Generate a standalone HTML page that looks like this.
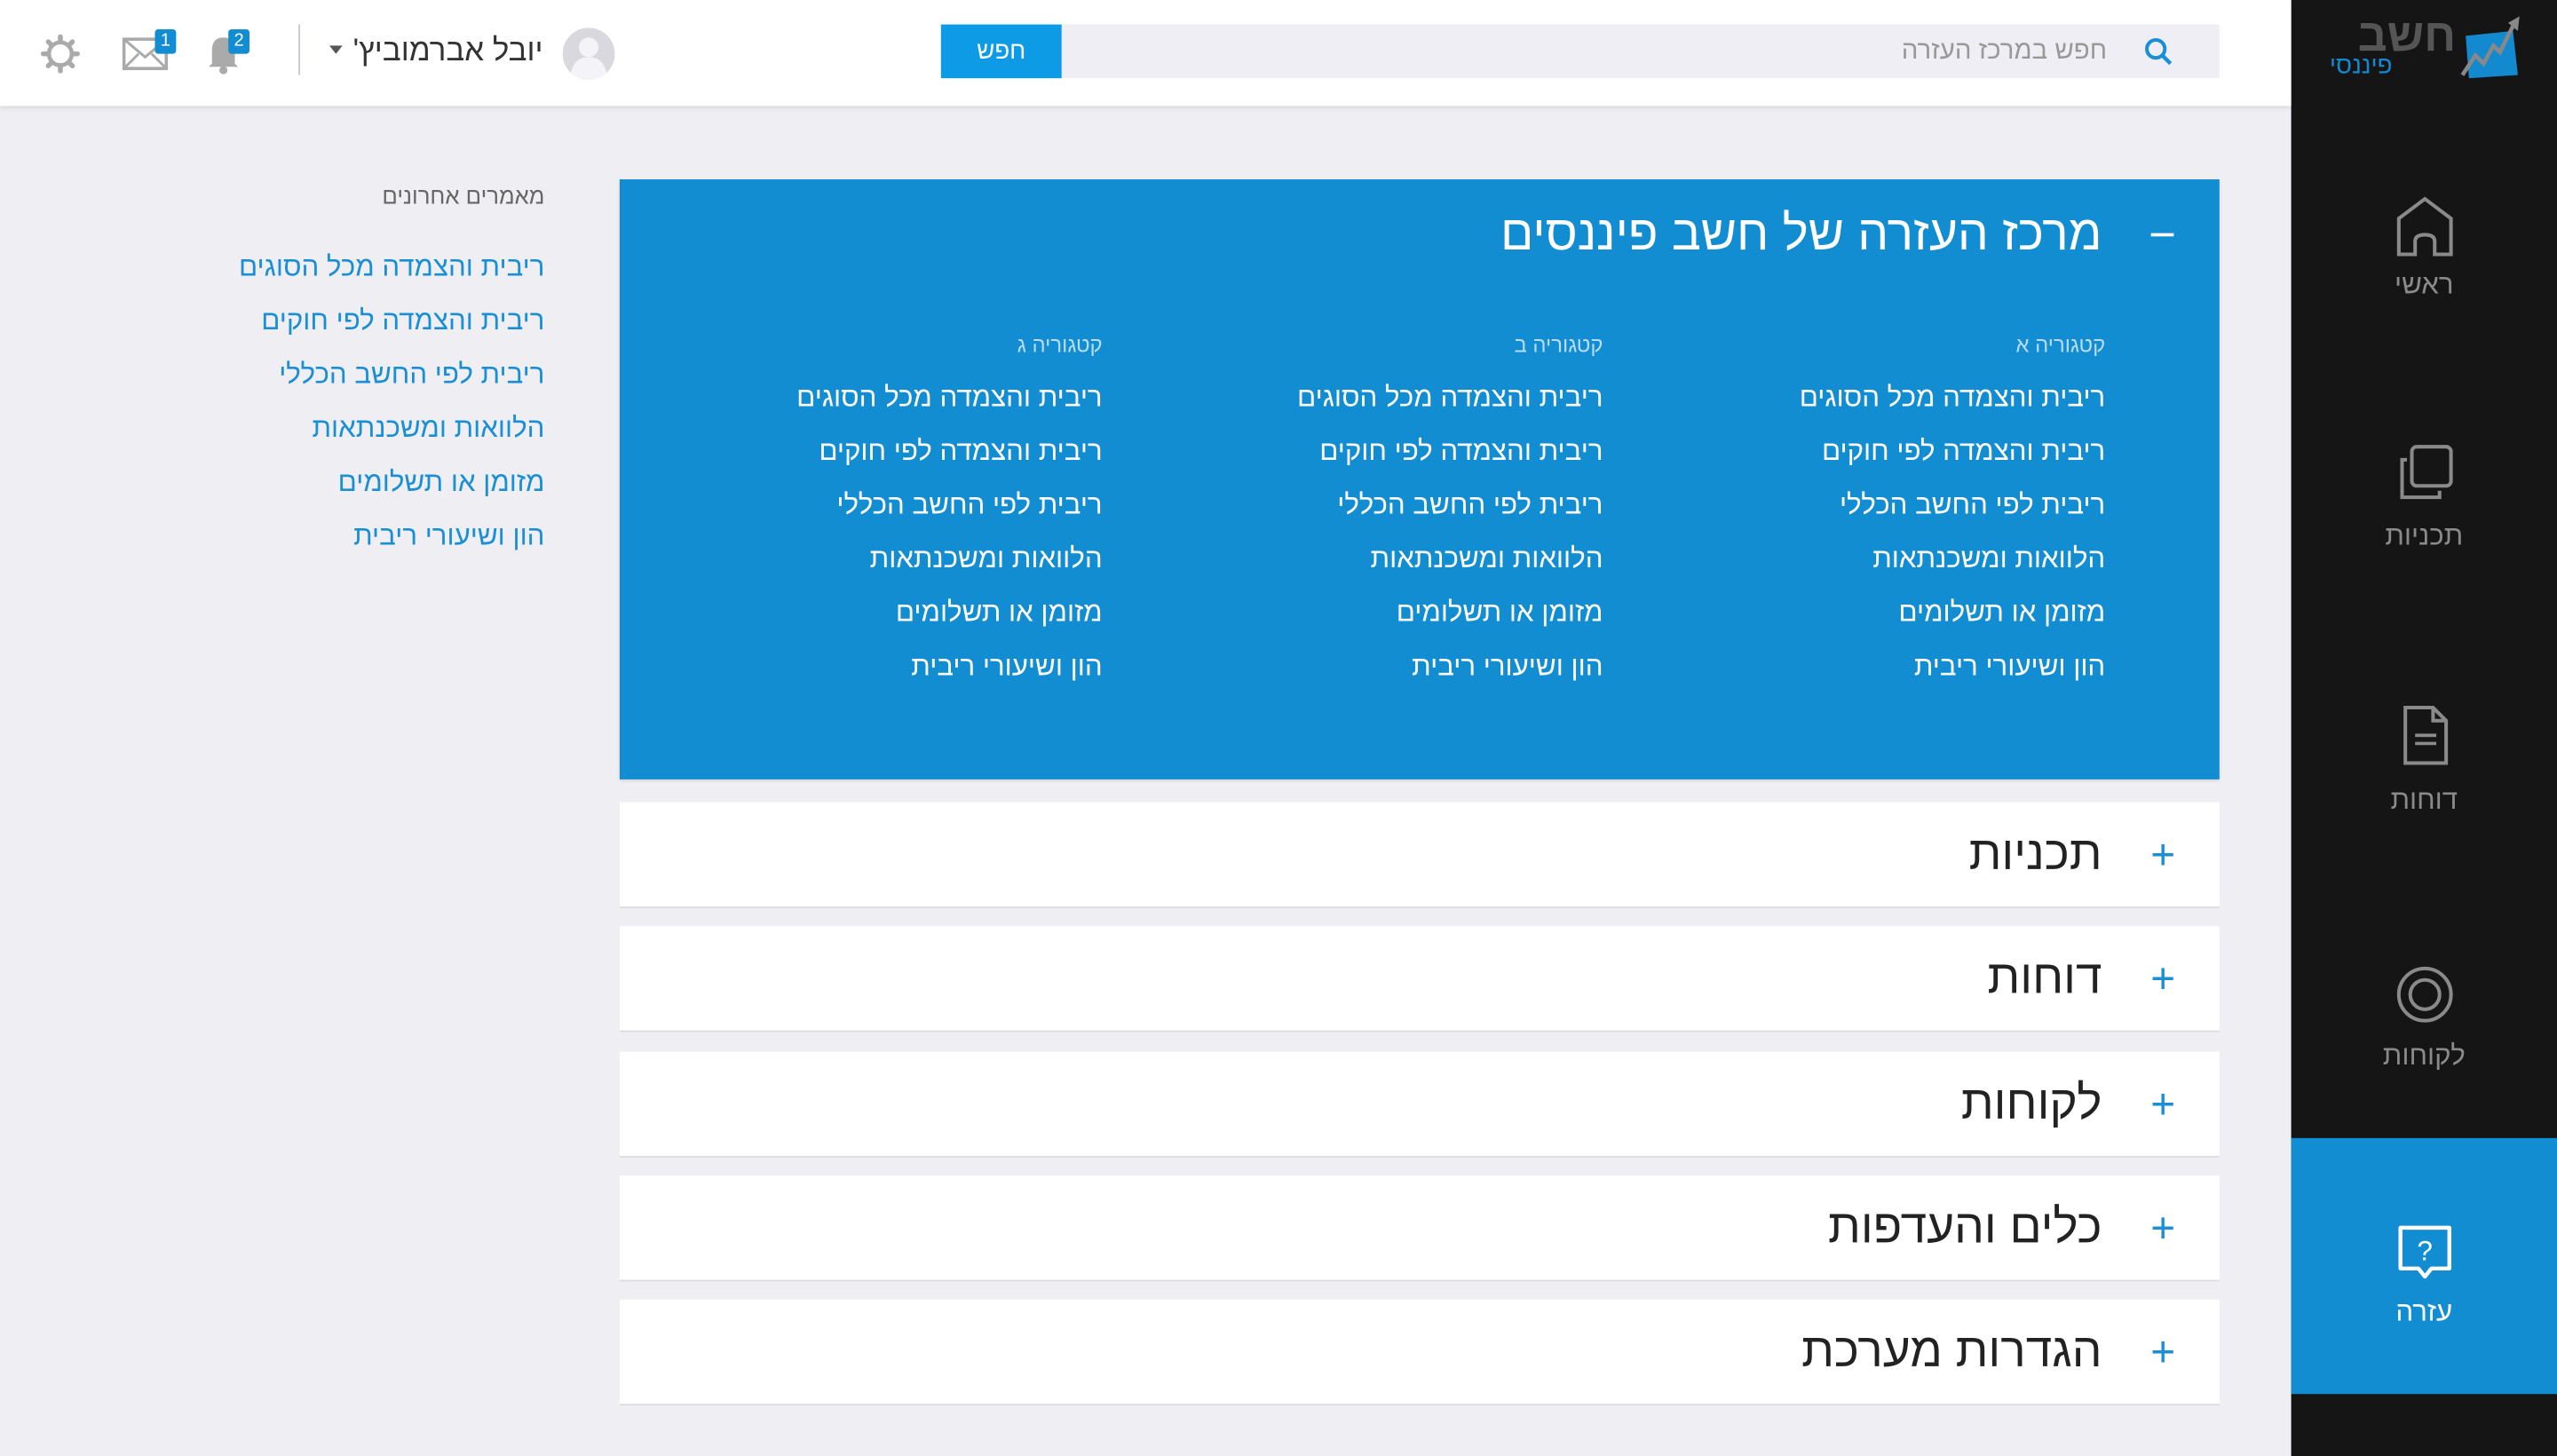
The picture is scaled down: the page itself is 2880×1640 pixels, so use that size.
<!DOCTYPE html>
<html><head><meta charset="utf-8"><style>
*{margin:0;padding:0;box-sizing:border-box}
html,body{width:2880px;height:1640px;overflow:hidden;background:#eeeef3}
#w{width:1568px;height:893px;position:relative;transform:scale(1.83673,1.8365);transform-origin:0 0;font-family:"Liberation Sans","Noto Sans CJK SC",sans-serif;background:#eeeef3}
.a{position:absolute}
.r{direction:rtl;text-align:right;white-space:nowrap}
#side{left:1405px;top:0;width:163px;height:893px;background:#151515}
.si{position:absolute;left:0;width:163px;text-align:center;color:#8a8a8a;font-size:17px}
#top{left:0;top:0;width:1405px;height:65px;background:#fff;box-shadow:0 1px 3px rgba(0,0,0,.12)}
.col div{height:33px;line-height:33px;color:#fff;font-size:17px}
.col .h{font-size:13px;color:#b9dcf2;height:30px;line-height:30px}
.acc{left:380px;width:981px;height:65px;background:#fff;border-bottom:1px solid #dcdce0}
.acc .t{position:absolute;right:72px;top:0;line-height:65px;font-size:29px;color:#222;font-weight:300;direction:rtl}
.acc .p{position:absolute;right:27px;top:0;line-height:65px;font-size:26px;color:#1a8fd6}
.rec div{height:33px;line-height:33px;color:#1a8fd6;font-size:17px}
</style></head><body><div id="w">
<div id="side" class="a">
 <svg class="a" style="left:100px;top:8px" width="42" height="42" viewBox="0 0 42 42"><path d="M7 14L36 11L39 38L9 40Z" fill="#1389d0"/><polyline points="5,38 13,26 18,31 24,20 28,24 37,6" fill="none" stroke="#888" stroke-width="2.5"/><polygon points="33,6 40,2 39,11" fill="#888"/></svg>
 <div class="a r" style="right:62px;top:6px;font-size:28px;font-weight:bold;color:#555;line-height:32px">חשב</div>
 <div class="a r" style="right:101px;top:32px;font-size:15px;color:#1389d0;line-height:18px">פיננסי</div>
 <div class="si" style="top:118px"><svg width="36" height="42" viewBox="0 0 36 42"><path d="M2 38V16L18 4 34 16V38H24V30Q24 26 18 26Q12 26 12 30V38Z" fill="none" stroke="#8a8a8a" stroke-width="2.2"/></svg><div style="margin-top:0">ראשי</div></div>
 <div class="si" style="top:272px"><svg width="36" height="36" viewBox="0 0 36 36"><rect x="10" y="2" width="24" height="24" rx="3" fill="none" stroke="#8a8a8a" stroke-width="2.2"/><path d="M7 10H4V33H27V29" fill="none" stroke="#8a8a8a" stroke-width="2.2"/></svg><div style="margin-top:6px">תכניות</div></div>
 <div class="si" style="top:432px"><svg width="30" height="38" viewBox="0 0 30 38"><path d="M3 2H20L28 10V36H3Z M20 2V10H28" fill="none" stroke="#8a8a8a" stroke-width="2.2"/><path d="M9 19H22M9 24H22" stroke="#8a8a8a" stroke-width="2"/></svg><div style="margin-top:6px">דוחות</div></div>
 <div class="si" style="top:591px"><svg width="38" height="38" viewBox="0 0 38 38"><circle cx="19" cy="19" r="16" fill="none" stroke="#8a8a8a" stroke-width="2.2"/><circle cx="19" cy="19" r="9" fill="none" stroke="#8a8a8a" stroke-width="2.2"/></svg><div style="margin-top:4px">לקוחות</div></div>
 <div class="a" style="left:0;top:698px;width:163px;height:157px;background:#128dd1"></div>
 <div class="si" style="top:750px;color:#fff"><svg width="38" height="38" viewBox="0 0 38 38"><path d="M4 3H34V28H23L19 33 15 28H4Z" fill="none" stroke="#fff" stroke-width="2.4" stroke-linejoin="round"/><text x="19" y="23" font-size="17" fill="#fff" text-anchor="middle" font-family="Liberation Sans">?</text></svg><div style="margin-top:2px">עזרה</div></div>
</div>
<div id="top" class="a">
 <div class="a" style="left:651px;top:15px;width:710px;height:33px;background:#eeeef4"></div>
 <div class="a" style="left:577px;top:15px;width:74px;height:33px;background:#0d9be6;color:#fff;font-size:15px;text-align:center;line-height:33px">חפש</div>
 <div class="a r" style="right:113px;top:15px;line-height:33px;font-size:16px;color:#999">חפש במרכז העזרה</div>
 <svg class="a" style="left:1315px;top:23px" width="18" height="18"><circle cx="7" cy="7" r="5.5" fill="none" stroke="#1a8fd6" stroke-width="2.2"/><path d="M11 11L16 16" stroke="#1a8fd6" stroke-width="2.4"/></svg>
 <svg class="a" style="left:345px;top:17px" width="32" height="32"><circle cx="16" cy="16" r="16" fill="#d8d8de"/><circle cx="16" cy="12" r="6" fill="#f4f4f8"/><path d="M5 28Q7 18 16 18Q25 18 27 28Q22 32 16 32Q10 32 5 28Z" fill="#f4f4f8"/></svg>
 <div class="a r" style="right:1072px;top:17px;line-height:30px;font-size:19px;color:#333">יובל אברמוביץ'</div>
 <div class="a" style="left:202px;top:28px;width:0;height:0;border-left:4px solid transparent;border-right:4px solid transparent;border-top:5px solid #555"></div>
 <div class="a" style="left:183px;top:15px;width:1px;height:31px;background:#c8c8d0"></div>
 <svg class="a" style="left:126px;top:20px" width="24" height="26"><path d="M4 19V11Q4 3 11 3Q18 3 18 11V19L20 21H2Z" fill="#aaa"/><circle cx="11" cy="23" r="2.5" fill="#aaa"/></svg>
 <div class="a" style="left:140px;top:18px;width:13px;height:15px;background:#128dd1;border-radius:2px;color:#fff;font-size:11px;text-align:center;line-height:15px">2</div>
 <svg class="a" style="left:75px;top:23px" width="28" height="20"><rect x="1" y="1" width="26" height="18" fill="none" stroke="#aaa" stroke-width="2"/><path d="M1 1L14 12 27 1M1 19L10 10M27 19L18 10" fill="none" stroke="#aaa" stroke-width="1.6"/></svg>
 <div class="a" style="left:95px;top:18px;width:13px;height:15px;background:#128dd1;border-radius:2px;color:#fff;font-size:11px;text-align:center;line-height:15px">1</div>
 <svg class="a" style="left:25px;top:21px" width="24" height="24" viewBox="0 0 24 24"><circle cx="12" cy="12" r="7" fill="none" stroke="#aaa" stroke-width="2.5"/><g stroke="#aaa" stroke-width="3" stroke-linecap="round"><path d="M12 1.5V4M12 20V22.5M1.5 12H4M20 12H22.5M4.6 4.6L6.3 6.3M17.7 17.7L19.4 19.4M4.6 19.4L6.3 17.7M17.7 6.3L19.4 4.6"/></g></svg>
</div>
<div class="a r" style="right:1234px;top:110px;font-size:14px;color:#666;line-height:20px">מאמרים אחרונים</div>
<div class="a r rec" style="right:1234px;top:147px"><div>ריבית והצמדה מכל הסוגים</div><div>ריבית והצמדה לפי חוקים</div><div>ריבית לפי החשב הכללי</div><div>הלוואות ומשכנתאות</div><div>מזומן או תשלומים</div><div>הון ושיעורי ריבית</div></div>
<div class="a" style="left:380px;top:110px;width:981px;height:368px;background:#128dd1;box-shadow:0 1px 2px rgba(0,0,0,.15)">
 <div class="a r" style="right:72px;top:14px;line-height:40px;font-size:30px;color:#fff;font-weight:300">מרכז העזרה של חשב פיננסים</div>
 <div class="a" style="right:28px;top:33px;width:14px;height:2px;background:#fff"></div>
 <div class="a r col" style="right:70px;top:87px"><div class="h">קטגוריה א</div><div>ריבית והצמדה מכל הסוגים</div><div>ריבית והצמדה לפי חוקים</div><div>ריבית לפי החשב הכללי</div><div>הלוואות ומשכנתאות</div><div>מזומן או תשלומים</div><div>הון ושיעורי ריבית</div></div>
 <div class="a r col" style="right:378px;top:87px"><div class="h">קטגוריה ב</div><div>ריבית והצמדה מכל הסוגים</div><div>ריבית והצמדה לפי חוקים</div><div>ריבית לפי החשב הכללי</div><div>הלוואות ומשכנתאות</div><div>מזומן או תשלומים</div><div>הון ושיעורי ריבית</div></div>
 <div class="a r col" style="right:685px;top:87px"><div class="h">קטגוריה ג</div><div>ריבית והצמדה מכל הסוגים</div><div>ריבית והצמדה לפי חוקים</div><div>ריבית לפי החשב הכללי</div><div>הלוואות ומשכנתאות</div><div>מזומן או תשלומים</div><div>הון ושיעורי ריבית</div></div>
</div>
<div class="a acc" style="top:492px"><div class="t">תכניות</div><div class="p">+</div></div>
<div class="a acc" style="top:568px"><div class="t">דוחות</div><div class="p">+</div></div>
<div class="a acc" style="top:645px"><div class="t">לקוחות</div><div class="p">+</div></div>
<div class="a acc" style="top:721px"><div class="t">כלים והעדפות</div><div class="p">+</div></div>
<div class="a acc" style="top:797px"><div class="t">הגדרות מערכת</div><div class="p">+</div></div>
</div></body></html>
